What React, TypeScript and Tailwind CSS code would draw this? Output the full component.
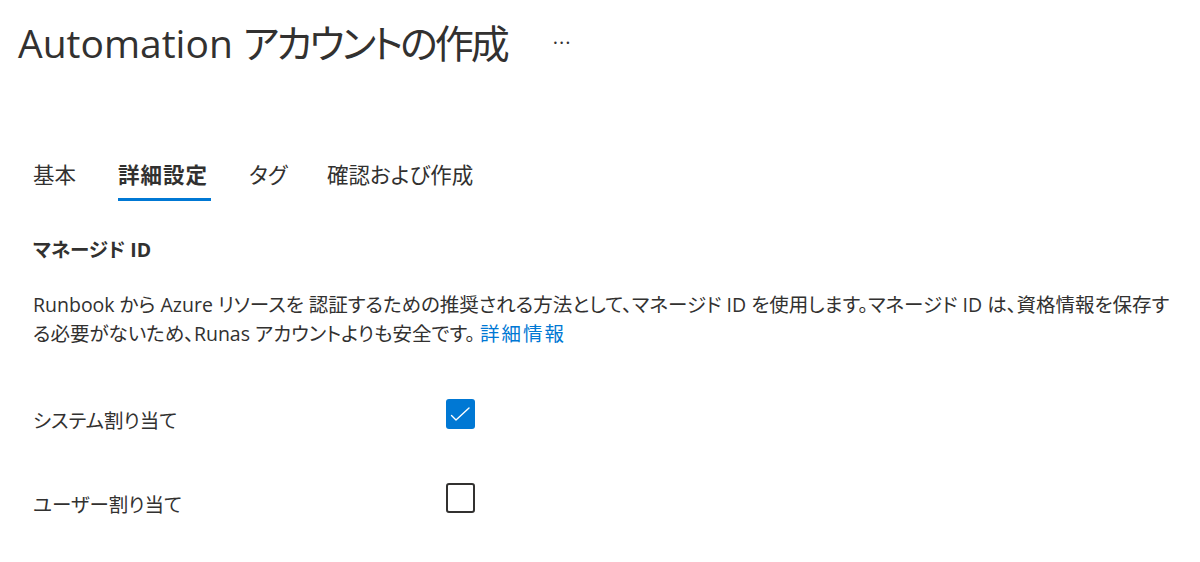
import React from "react";

const font = {
  fontFamily: '"Open Sans", "Noto Sans CJK JP", sans-serif',
};

function CheckBox({ checked }: { checked: boolean }) {
  if (checked) {
    return (
      <div className="w-[29px] h-[30px] rounded-[3px] bg-[#0078d4] flex items-center justify-center">
        <svg width="29" height="30" viewBox="0 0 29 30" fill="none">
          <polyline points="5.5,16.5 10,21 23,9" stroke="#ffffff" strokeWidth="1.4" strokeLinecap="round" strokeLinejoin="round" />
        </svg>
      </div>
    );
  }
  return <div className="w-[29px] h-[30px] rounded-[3px] border-[2px] border-[#323130] bg-white" />;
}

export default function App() {
  return (
    <div
      className="w-[1200px] h-[562px] bg-white text-[#323130] overflow-hidden [font-feature-settings:'palt']"
      style={font}
    >
      {/* Title */}
      <div className="flex items-center pl-[18px] pt-[17px]">
        <h1 className="text-[39px] leading-[52px] font-normal">
          Automation <span className="tracking-[-3px]">アカウントの作成</span>
        </h1>
        <div className="ml-[46px] text-[20px] leading-[52px] tracking-[1px] text-[#323130]">···</div>
      </div>

      {/* Tabs */}
      <div className="flex items-start pl-[33px] mt-[91px] text-[21.5px] leading-[30px]">
        <div className="w-[85px] h-[41px]">基本</div>
        <div className="w-[131px] h-[41px] relative">
          <span className="font-semibold tracking-[1px]">詳細設定</span>
          <div className="absolute left-0 top-[38px] w-[93px] h-[3px] bg-[#0078d4]" />
        </div>
        <div className="w-[78px] h-[41px]">タグ</div>
        <div className="h-[41px]">確認および作成</div>
      </div>

      {/* Section heading */}
      <div className="pl-[33px] mt-[35px] text-[19.5px] leading-[28px] font-bold">マネージド ID</div>

      {/* Description */}
      <p className="pl-[33px] mt-[27px] text-[19.5px] leading-[28.5px]">
        Runbook から Azure リソースを 認証するための推奨される方法として、マネージド ID を使用します。マネージド ID は、資格情報を保存す
        <br />
        る必要がないため、Runas アカウントよりも安全です。 <span className="text-[#0078d4] tracking-[2px]">詳細情報</span>
      </p>

      {/* Options */}
      <div className="flex flex-col pl-[33px] mt-[51px] gap-[48px] text-[19.5px] leading-[28px]">
        <div className="flex items-start">
          <div className="w-[413px] pt-[8px]">システム割り当て</div>
          <CheckBox checked />
        </div>
        <div className="flex items-start">
          <div className="w-[413px] pt-[8px]">ユーザー割り当て</div>
          <CheckBox checked={false} />
        </div>
      </div>
    </div>
  );
}
